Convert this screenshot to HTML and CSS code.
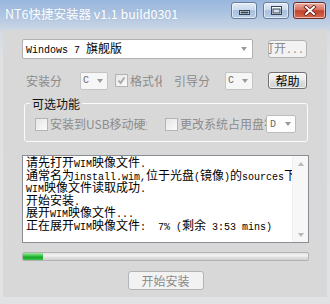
FILE: index.html
```html
<!DOCTYPE html>
<html>
<head>
<meta charset="utf-8">
<title>NT6快捷安装器</title>
<link rel="stylesheet" href="styles.css">
</head>
<body>
<div class="window">
  <div class="titlebar">
    <div class="title">NT6快捷安装器 v1.1 build0301</div>
    <div class="caption">
      <div class="cbtn cbtn-min">
        <svg width="11" height="5" viewBox="0 0 11 5"><rect x="0.5" y="0.5" width="10" height="4" fill="#fff" stroke="#33435a"/><rect x="1.5" y="1.5" width="8" height="2" fill="#33435a"/></svg>
      </div>
      <div class="cbtn cbtn-max">
        <svg width="11" height="9" viewBox="0 0 11 9"><rect x="0.5" y="0.5" width="10" height="8" fill="#fff" stroke="#33435a"/><rect x="2" y="3" width="7" height="4" fill="#d4e0ee" stroke="#33435a"/></svg>
      </div>
      <div class="cbtn cbtn-close">
        <svg width="14" height="11" viewBox="0 0 14 11"><path d="M3 2 L11 9 M11 2 L3 9" stroke="#5a1a12" stroke-width="3.6" stroke-linecap="square"/><path d="M3 2 L11 9 M11 2 L3 9" stroke="#fff" stroke-width="2" stroke-linecap="square"/></svg>
      </div>
    </div>
  </div>
  <div class="client">
    <div class="row row1">
      <div class="combo combo-main"><span class="combo-text"><span class="en">Windows 7 </span>旗舰版</span><span class="arrow"></span></div>
      <div class="btn btn-disabled btn-open"><span class="btn-open-text">打开<span class="en">...</span></span></div>
    </div>
    <div class="row row2">
      <span class="lbl lbl-part">安装分</span>
      <div class="combo combo-sm"><span class="en combo-val">C</span><span class="arrow"></span></div>
      <span class="chk chk-checked"><svg width="9" height="9" viewBox="0 0 9 9"><path d="M1.5 4.5 L3.6 7 L7.5 1.5" fill="none" stroke="#a6a6a6" stroke-width="1.8"/></svg></span>
      <span class="lbl lbl-fmt">格式化</span>
      <span class="lbl lbl-boot">引导分</span>
      <div class="combo combo-sm"><span class="en combo-val">C</span><span class="arrow"></span></div>
      <div class="btn btn-help">帮助</div>
    </div>
    <fieldset class="group">
      <legend>可选功能</legend>
      <div class="row row3">
        <span class="chk"></span>
        <span class="lbl lbl-usb">安装到USB移动硬盘:</span>
        <span class="chk chk-second"></span>
        <span class="lbl lbl-sys">更改系统占用盘符:</span>
        <div class="combo combo-d"><span class="en combo-val">D</span><span class="arrow"></span></div>
      </div>
    </fieldset>
    <div class="log">
      <div class="log-text">
        <div class="line">请先打开<span class="en">WIM</span>映像文件<span class="en">.</span></div>
        <div class="line">通常名为<span class="en">install.wim,</span>位于光盘<span class="en">(</span>镜像<span class="en">)</span>的<span class="en">sources</span>下</div>
        <div class="line"><span class="en">WIM</span>映像文件读取成功<span class="en">.</span></div>
        <div class="line">开始安装<span class="en">.</span></div>
        <div class="line">展开<span class="en">WIM</span>映像文件<span class="en">...</span></div>
        <div class="line">正在展开<span class="en">WIM</span>映像文件<span class="en">:  7% (</span>剩余<span class="en"> 3:53 mins)</span></div>
      </div>
      <div class="scrollbar"><span class="sb-up"></span><span class="sb-down"></span></div>
    </div>
    <div class="progress"><div class="progress-fill" style="width:7%"></div></div>
    <div class="row row-start"><div class="btn btn-disabled btn-start">开始安装</div></div>
  </div>
</div>
</body>
</html>
```

FILE: styles.css
```css
* { box-sizing: border-box; }
html, body { margin: 0; padding: 0; }
body {
  width: 330px;
  height: 304px;
  overflow: hidden;
  font-family: "Noto Sans CJK SC", "Noto Sans", sans-serif;
  font-size: 12px;
}
.en { font-family: "Liberation Mono", monospace; font-size: 10px; }

.window {
  width: 330px;
  height: 304px;
  display: flex;
  flex-direction: column;
  background: linear-gradient(#98b6dd 0px, #aac2e1 12px, #c4d2e3 26px, #d7dce2 34px, #dfe1e3 60px, #e1e2e3 100%);
}
.titlebar {
  flex: none;
  height: 30px;
  display: flex;
  align-items: flex-start;
}
.title {
  padding: 6px 0 0 5px;
  color: #fff;
  font-size: 12.5px;
  line-height: 16px;
  white-space: nowrap;
  text-shadow: 0 0 2px rgba(120,150,190,0.35);
}
.caption {
  margin-left: auto;
  margin-top: 2px;
  margin-right: 4px;
  display: flex;
}
.cbtn {
  height: 17px;
  border: 1px solid #687d99;
  border-radius: 3px;
  display: flex;
  align-items: center;
  justify-content: center;
  box-shadow: inset 0 0 0 1px rgba(255,255,255,0.55);
}
.cbtn-min {
  width: 26px;
  align-items: flex-end;
  padding-bottom: 3px;
  background: linear-gradient(#e4edf8, #c9d8ec 45%, #a8bfde 52%, #bcd0e9);
}
.cbtn-max {
  width: 26px;
  margin-left: 6px;
  background: linear-gradient(#e4edf8, #c9d8ec 45%, #a8bfde 52%, #bcd0e9);
}
.cbtn-close {
  width: 33px;
  margin-left: 4px;
  border-color: #6b2a22;
  background: linear-gradient(#eab0a6, #d9705e 45%, #c2412c 52%, #d86a4e);
}

.client {
  flex: none;
  height: 267px;
  margin: 0 3px;
  padding-left: 19px;
  background: #d8d8d8;
  display: flex;
  flex-direction: column;
  align-items: flex-start;
}
.row { display: flex; align-items: center; }

.combo {
  display: flex;
  align-items: center;
  background: #fff;
  border: 1px solid #b0b0b0;
  border-radius: 2px;
  color: #000;
}
.arrow {
  margin-left: auto;
  width: 0;
  height: 0;
  border-left: 3.5px solid transparent;
  border-right: 3.5px solid transparent;
  border-top: 4px solid #9a9a9a;
}
.row1 { margin-top: 9px; height: 20px; }
.combo-main { width: 231px; height: 20px; padding-left: 3px; }
.combo-main .arrow { margin-right: 5px; }
.combo-text { white-space: pre; line-height: 16px; }

.btn {
  display: flex;
  align-items: center;
  justify-content: center;
  border-radius: 3px;
  white-space: nowrap;
  line-height: 14px;
}
.btn-disabled {
  border: 1px solid #b0b4b8;
  background: #f2f2f2;
  color: #8a8a8a;
}
.btn-open {
  margin-left: 15px;
  width: 39px;
  height: 18px;
  overflow: hidden;
  justify-content: flex-end;
  padding-right: 2px;
}
.btn-open-text { flex: none; }

.row2 { margin-top: 12px; height: 19px; }
.lbl { color: #8c8c8c; white-space: nowrap; line-height: 16px; }
.lbl-part { margin-left: 4px; width: 54px; }
.combo-sm {
  width: 28px;
  height: 18px;
  padding-left: 2px;
  background: #f6f6f6;
  border-color: #c4c4c4;
}
.combo-sm .arrow { margin-right: 4px; }
.combo-val { color: #6a6a6a; }
.chk {
  flex: none;
  width: 13px;
  height: 13px;
  border: 1px solid #b4b4b4;
  background: linear-gradient(135deg, #e6e6e6, #fbfbfb);
  display: flex;
  align-items: center;
  justify-content: center;
}
.row2 .chk { margin-left: 7px; }
.lbl-fmt { width: 34px; overflow: hidden; padding-left: 2px; }
.lbl-boot { margin-left: 12px; width: 51px; }
.btn-help {
  margin-left: 15px;
  width: 39px;
  height: 17px;
  border: 1px solid #707070;
  background: linear-gradient(#f4f4f4, #ebebeb 45%, #dddddd 55%, #d2d2d2);
  color: #000;
  box-shadow: inset 0 0 0 1px rgba(255,255,255,0.7);
}

.group {
  margin: 6px 0 0 2px;
  width: 284px;
  padding: 0 0 8px 5px;
  border: 1px solid #fbfbfb;
  border-radius: 3px;
  min-width: 0;
}
.group legend {
  padding: 0 2px;
  font-size: 12px;
  line-height: 15px;
  color: #111;
}
.row3 { margin-top: 4px; margin-left: 5px; height: 18px; }
.lbl-usb { width: 99px; overflow: hidden; padding-left: 2px; }
.chk-second { margin-left: 18px; }
.lbl-sys { width: 88px; overflow: hidden; padding-left: 2px; }
.combo-d {
  width: 30px;
  height: 18px;
  padding-left: 3px;
  background: #fdfdfd;
  border-color: #bcbcbc;
}
.combo-d .arrow { margin-right: 4px; }

.log {
  margin-top: 13px;
  width: 287px;
  height: 88px;
  border: 1px solid #8a8e94;
  background: #fff;
  display: flex;
}
.log-text {
  flex: 1;
  min-width: 0;
  overflow: hidden;
  padding: 0 0 0 3px;
  color: #000;
  line-height: 12.5px;
}
.line { white-space: pre; height: 12.5px; }
.scrollbar {
  flex: none;
  width: 16px;
  background: #f7f7f7;
  border-left: 1px solid #f0f0f0;
  display: flex;
  flex-direction: column;
  align-items: center;
  justify-content: space-between;
  padding: 6px 0 5px;
}
.sb-up, .sb-down {
  width: 0;
  height: 0;
  border-left: 3.5px solid transparent;
  border-right: 3.5px solid transparent;
}
.sb-up { border-bottom: 4px solid #b8b8b8; }
.sb-down { border-top: 4px solid #b8b8b8; }

.progress {
  margin-top: 9px;
  width: 287px;
  height: 9px;
  border: 1px solid #b2b2b2;
  border-radius: 2px;
  background: linear-gradient(#e2e2e2, #f4f4f4 40%, #e0e0e0 60%, #d2d2d2);
  overflow: hidden;
}
.progress-fill {
  height: 100%;
  background: linear-gradient(#9fe8a4, #3cc84a 40%, #16a629 60%, #39c24a);
}

.row-start { margin-top: 10px; width: 287px; justify-content: center; }
.btn-start { width: 76px; height: 19px; }
```
